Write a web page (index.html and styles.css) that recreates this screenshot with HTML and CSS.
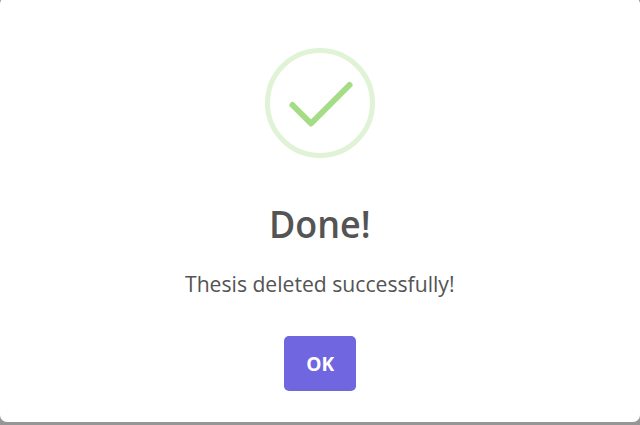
FILE: index.html
```html
<!DOCTYPE html>
<html lang="en">
<head>
<meta charset="utf-8">
<title>Done!</title>
<link rel="stylesheet" href="styles.css">
</head>
<body>
<main class="popup" role="dialog" aria-labelledby="title">
  <svg class="icon" viewBox="0 0 110 110" aria-hidden="true">
    <circle class="ring" cx="55" cy="55" r="52.5"/>
    <path class="check" d="M27.5 57 46 75.5 84.5 37"/>
  </svg>
  <h1 class="title" id="title"><span>Done!</span></h1>
  <p class="message"><span>Thesis deleted successfully!</span></p>
  <button class="confirm" type="button"><span>OK</span></button>
</main>
</body>
</html>
```
FILE: styles.css
```css
* { box-sizing: border-box; }
body {
  display: flow-root;
  margin: 0;
  height: 425px;
  overflow: hidden;
  background: #969696;
  font-family: "Open Sans", "Noto Sans", sans-serif;
}
.popup {
  display: flex;
  flex-direction: column;
  align-items: center;
  height: 425px;
  margin-top: -3px;
  padding-top: 51px;
  border-radius: 7px;
  background: #fff;
}
.icon { width: 110px; height: 110px; flex: none; }
.ring { fill: none; stroke: #e1f3d7; stroke-width: 5; }
.check { fill: none; stroke: #a5dc86; stroke-width: 6; stroke-linecap: round; stroke-linejoin: round; }
.title {
  margin: 38px 0 0;
  font-size: 38px;
  font-weight: 600;
  line-height: 54px;
  color: #545454;
}
.message {
  margin: 18px 0 0;
  font-size: 22.4px;
  line-height: 32px;
  color: #545454;
}
.title span, .message span, .confirm span { display: inline-block; white-space: nowrap; }
.title span { transform: scaleX(.945); }
.message span { transform: scaleX(.944); }
.confirm {
  width: 72px;
  height: 55px;
  margin-top: 36px;
  padding: 0;
  border: 0;
  border-radius: 5px;
  background: #7066e0;
  color: #fff;
  font: 700 19.5px/55px "Open Sans", "Noto Sans", sans-serif;
}
.confirm span { transform: scaleX(.98); }
```
